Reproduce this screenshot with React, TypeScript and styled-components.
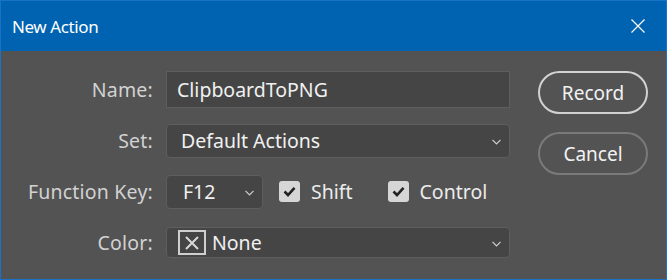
import React from 'react';
import styled, { createGlobalStyle } from 'styled-components';

const GlobalStyle = createGlobalStyle`
  html, body {
    margin: 0;
    padding: 0;
    background: #535353;
  }
  * {
    box-sizing: border-box;
  }
`;

const Window = styled.div`
  width: 667px;
  height: 280px;
  border: 1px solid #1a72c8;
  background: #535353;
  font-family: "Noto Sans", "Open Sans", sans-serif;
  display: flex;
  flex-direction: column;
`;

const TitleBar = styled.div`
  height: 50px;
  background: #0063b1;
  color: #ffffff;
  display: flex;
  align-items: center;
  justify-content: space-between;
  padding: 0 20px 0 11px;
  flex-shrink: 0;
`;

const Title = styled.div`
  font-size: 17px;
  letter-spacing: -0.4px;
`;

const CloseButton = styled.div`
  width: 16px;
  height: 16px;
  display: flex;
  align-items: center;
  justify-content: center;
`;

const Body = styled.div`
  display: flex;
  padding: 13px 18px 0 11px;
`;

const Form = styled.div`
  display: grid;
  grid-template-columns: 141px 344px;
  grid-auto-rows: 51px;
  column-gap: 13px;
  align-items: center;
`;

const Label = styled.div`
  justify-self: end;
  color: #d2d2d2;
  font-size: 19.5px;
  letter-spacing: 0.2px;
`;

const TextInput = styled.div`
  height: 37px;
  background: #454545;
  border: 1px solid #5e5e5e;
  color: #f0f0f0;
  font-size: 19.5px;
  display: flex;
  align-items: center;
  padding-left: 10px;
`;

const Select = styled.div<{ $height: number; $width?: number; $padLeft?: number }>`
  height: ${p => p.$height}px;
  width: ${p => (p.$width ? `${p.$width}px` : '100%')};
  background: #454545;
  border: 1px solid #5e5e5e;
  border-radius: 4px;
  color: #f0f0f0;
  font-size: 19.5px;
  display: flex;
  align-items: center;
  padding: 0 8px 0 ${p => p.$padLeft ?? 14}px;
  gap: 5px;
`;

const SelectText = styled.span`
  flex: 1;
`;

const Chevron = () => (
  <svg width="9" height="6" viewBox="0 0 9 6" style={{ marginTop: 2 }}>
    <polyline points="0.5,0.8 4.5,4.8 8.5,0.8" fill="none" stroke="#cfcfcf" strokeWidth="1.2" />
  </svg>
);

const KeyRow = styled.div`
  display: flex;
  align-items: center;
`;

const CheckItem = styled.label<{ $gapBefore: number }>`
  display: flex;
  align-items: center;
  gap: 11px;
  margin-left: ${p => p.$gapBefore}px;
  color: #ececec;
  font-size: 19.5px;
`;

const CheckBox = styled.span`
  width: 21px;
  height: 21px;
  border-radius: 3px;
  background: #d6d6d6;
  display: flex;
  align-items: center;
  justify-content: center;
`;

const Swatch = styled.span`
  width: 28px;
  height: 25px;
  border: 2px solid #cfcfcf;
  background: #454545;
  display: flex;
  align-items: center;
  justify-content: center;
  margin-right: 1px;
`;

const Buttons = styled.div`
  margin-left: auto;
  padding-top: 7px;
  display: flex;
  flex-direction: column;
  gap: 18px;
`;

const PillButton = styled.button<{ $primary?: boolean }>`
  width: 110px;
  height: 43px;
  border-radius: 22px;
  background: transparent;
  border: 2px solid ${p => (p.$primary ? '#d2d2d2' : '#7a7a7a')};
  color: #f2f2f2;
  font-family: "Noto Sans", "Open Sans", sans-serif;
  font-size: 19px;
  padding: 0;
  cursor: pointer;
`;

const Check = () => (
  <svg width="13" height="11" viewBox="0 0 13 11">
    <polyline points="1.5,5.5 5,9 11.5,1.8" fill="none" stroke="#222" strokeWidth="2.6" />
  </svg>
);

const App: React.FC = () => {
  return (
    <>
      <GlobalStyle />
      <Window>
        <TitleBar>
          <Title>New Action</Title>
          <CloseButton>
            <svg width="14" height="14" viewBox="0 0 14 14">
              <path d="M0.5 0.5 L13.5 13.5 M13.5 0.5 L0.5 13.5" stroke="#fff" strokeWidth="1.2" />
            </svg>
          </CloseButton>
        </TitleBar>
        <Body>
          <Form>
            <Label>Name:</Label>
            <TextInput>ClipboardToPNG</TextInput>

            <Label>Set:</Label>
            <Select $height={34}>
              <SelectText>Default Actions</SelectText>
              <Chevron />
            </Select>

            <Label>Function Key:</Label>
            <KeyRow>
              <Select $height={34} $width={97} $padLeft={16}>
                <SelectText>F12</SelectText>
                <Chevron />
              </Select>
              <CheckItem $gapBefore={16}>
                <CheckBox><Check /></CheckBox>
                Shift
              </CheckItem>
              <CheckItem $gapBefore={35}>
                <CheckBox><Check /></CheckBox>
                Control
              </CheckItem>
            </KeyRow>

            <Label>Color:</Label>
            <Select $height={31} $padLeft={11}>
              <Swatch>
                <svg width="14" height="14" viewBox="0 0 14 14">
                  <path d="M1 1 L13 13 M13 1 L1 13" stroke="#d8d8d8" strokeWidth="2" />
                </svg>
              </Swatch>
              <SelectText>None</SelectText>
              <Chevron />
            </Select>
          </Form>
          <Buttons>
            <PillButton $primary>Record</PillButton>
            <PillButton>Cancel</PillButton>
          </Buttons>
        </Body>
      </Window>
    </>
  );
};

export default App;
